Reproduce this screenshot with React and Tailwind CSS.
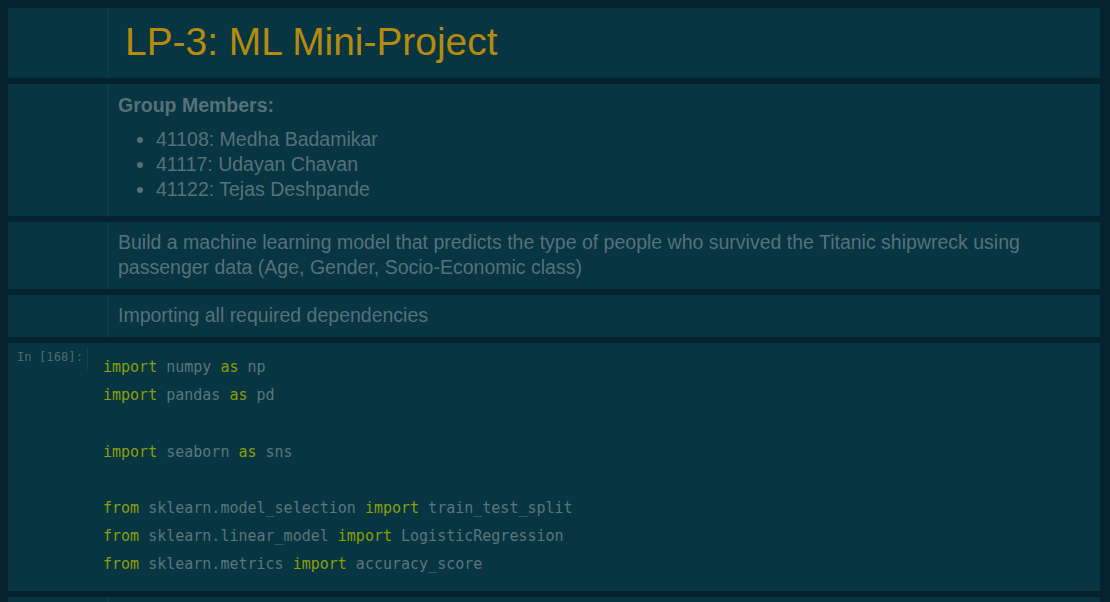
const body = { fontFamily: '"Liberation Sans", Arial, sans-serif' };
const mono = { fontFamily: '"DejaVu Sans Mono", "Liberation Mono", monospace' };

function MarkdownCell({ className = "", children }) {
  return (
    <div className="flex bg-[#073541]">
      <div className="w-[99px] shrink-0" />
      <div className={`flex-1 border-l-2 border-[#0b3c49] ${className}`}>{children}</div>
    </div>
  );
}

function Kw({ children }) {
  return <span className="text-[#8a9f0a]">{children}</span>;
}

export default function App() {
  const code = [
    [<Kw>import</Kw>, " numpy ", <Kw>as</Kw>, " np"],
    [<Kw>import</Kw>, " pandas ", <Kw>as</Kw>, " pd"],
    [],
    [<Kw>import</Kw>, " seaborn ", <Kw>as</Kw>, " sns"],
    [],
    [<Kw>from</Kw>, " sklearn.model_selection ", <Kw>import</Kw>, " train_test_split"],
    [<Kw>from</Kw>, " sklearn.linear_model ", <Kw>import</Kw>, " LogisticRegression"],
    [<Kw>from</Kw>, " sklearn.metrics ", <Kw>import</Kw>, " accuracy_score"],
  ];

  return (
    <div className="min-h-screen bg-[#04232e] pt-2 pl-2 pr-[10px] flex flex-col gap-[6px]" style={body}>
      <MarkdownCell className="pl-[16px] pt-[12px] pb-[14px]">
        <h1 className="text-[38.9px] leading-[44px] text-[#b68b0d]">LP-3: ML Mini-Project</h1>
      </MarkdownCell>

      <MarkdownCell className="pl-[9px] pt-[9px] pb-[14px] text-[19.5px] leading-[25px] text-[#56717a]">
        <div className="font-bold">Group Members:</div>
        <ul className="mt-[9px] pl-[38px] list-disc">
          <li>41108: Medha Badamikar</li>
          <li>41117: Udayan Chavan</li>
          <li>41122: Tejas Deshpande</li>
        </ul>
      </MarkdownCell>

      <MarkdownCell className="pl-[9px] pt-[8px] pb-[9px] pr-[60px] text-[19.5px] leading-[25px] text-[#56717a]">
        <p>
          Build a machine learning model that predicts the type of people who survived the Titanic shipwreck using
          passenger data (Age, Gender, Socio-Economic class)
        </p>
      </MarkdownCell>

      <MarkdownCell className="pl-[9px] pt-[8px] pb-[9px] text-[19.5px] leading-[25px] text-[#56717a]">
        <p>Importing all required dependencies</p>
      </MarkdownCell>

      <div className="flex bg-[#073541] h-[248px]">
        <div className="w-[80px] shrink-0 pt-[5px] flex justify-end">
          <div className="h-[22px] pr-[4px] border-r border-[#0f4350] text-[12.2px] leading-[18px] text-[#4f6a73]" style={mono}>
            In [168]:
          </div>
        </div>
        <pre className="pl-[15px] pt-[10px] text-[15px] leading-[28.2px] text-[#5b767e]" style={mono}>
          {code.map((line, i) => (
            <div key={i} className="h-[28.2px]">
              {line.map((part, j) => (
                <span key={j}>{part}</span>
              ))}
            </div>
          ))}
        </pre>
      </div>

      <MarkdownCell className="h-[20px]" />
    </div>
  );
}
